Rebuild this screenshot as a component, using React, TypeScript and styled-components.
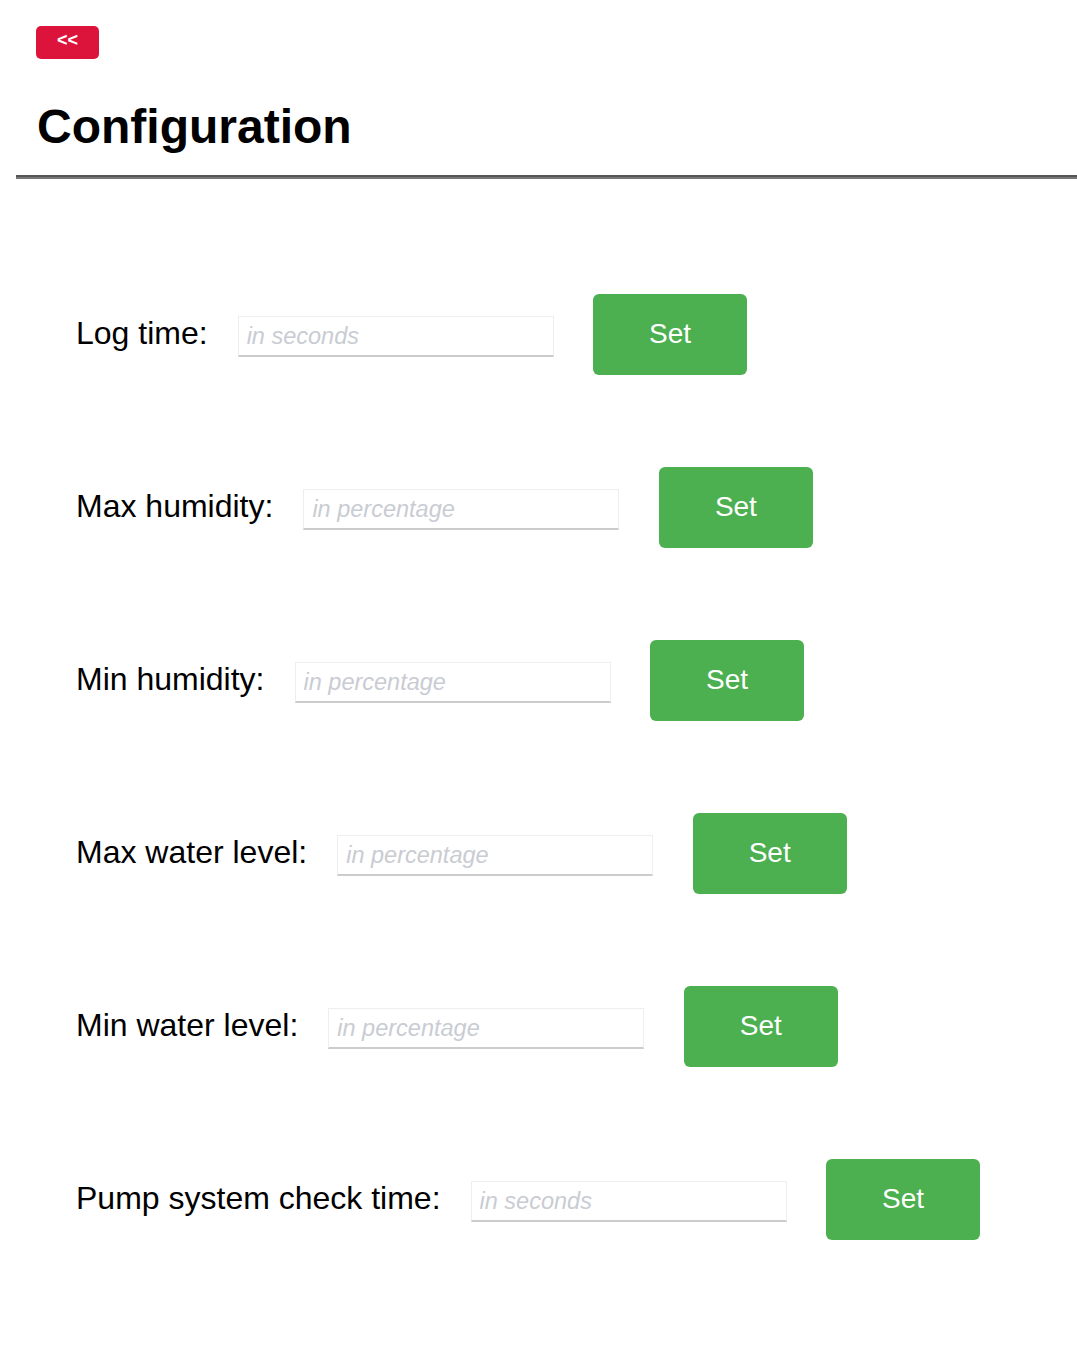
import React from "react";
import styled, { createGlobalStyle } from "styled-components";

const GlobalStyle = createGlobalStyle`
  body {
    margin: 0;
    background: #ffffff;
    font-family: "Liberation Sans", Arial, sans-serif;
    color: #000000;
  }
`;

const settings = [
  { label: "Log time:", placeholder: "in seconds" },
  { label: "Max humidity:", placeholder: "in percentage" },
  { label: "Min humidity:", placeholder: "in percentage" },
  { label: "Max water level:", placeholder: "in percentage" },
  { label: "Min water level:", placeholder: "in percentage" },
  { label: "Pump system check time:", placeholder: "in seconds" },
];

const App: React.FC = () => {
  return (
    <>
      <GlobalStyle />
      <Page>
        <Header>
          <BackButton>&lt;&lt;</BackButton>
          <Title>Configuration</Title>
        </Header>
        <Divider />
        <Settings>
          {settings.map((s) => (
            <Row key={s.label}>
              <Label>{s.label}</Label>
              <Field type="text" placeholder={s.placeholder} />
              <SetButton>Set</SetButton>
            </Row>
          ))}
        </Settings>
      </Page>
    </>
  );
};

export default App;

const Page = styled.div`
  padding: 26px 0 100px 16px;
`;

const Header = styled.div`
  display: flex;
  flex-direction: column;
  align-items: flex-start;
  padding-left: 20px;
`;

const BackButton = styled.button`
  width: 63px;
  height: 33px;
  border: none;
  border-radius: 5px;
  background: #dc143c;
  color: #ffffff;
  font-family: "Liberation Sans", Arial, sans-serif;
  font-weight: bold;
  font-size: 18px;
  padding: 0 0 4px;
  cursor: pointer;
`;

const Title = styled.h1`
  margin: 40px 0 0 1px;
  font-size: 48px;
  line-height: 55px;
  font-weight: bold;
`;

const Divider = styled.hr`
  margin: 21px 0 0;
  height: 0;
  border: none;
  border-top: 2px solid #555555;
  border-bottom: 2px solid #777777;
`;

const Settings = styled.div`
  display: flex;
  flex-direction: column;
  gap: 93px;
  padding: 115px 0 0 60px;
`;

const Row = styled.div`
  display: flex;
  align-items: center;
  height: 80px;
`;

const Label = styled.label`
  font-size: 32px;
  margin-right: 30px;
  padding-bottom: 2px;
`;

const Field = styled.input`
  box-sizing: border-box;
  width: 316px;
  height: 41px;
  margin-top: 5px;
  margin-right: 39.5px;
  padding: 0 8px;
  border: 1px solid #eeeeee;
  border-bottom: 2px solid #cccccc;
  background: #ffffff;
  font-family: "Liberation Sans", Arial, sans-serif;
  font-size: 23.5px;
  outline: none;

  &::placeholder {
    color: #c9ccd3;
    font-style: italic;
  }
`;

const SetButton = styled.button`
  width: 154px;
  height: 81px;
  border: none;
  border-radius: 6px;
  background: #4caf50;
  color: #ffffff;
  font-family: "Liberation Sans", Arial, sans-serif;
  font-size: 28px;
  cursor: pointer;
`;
